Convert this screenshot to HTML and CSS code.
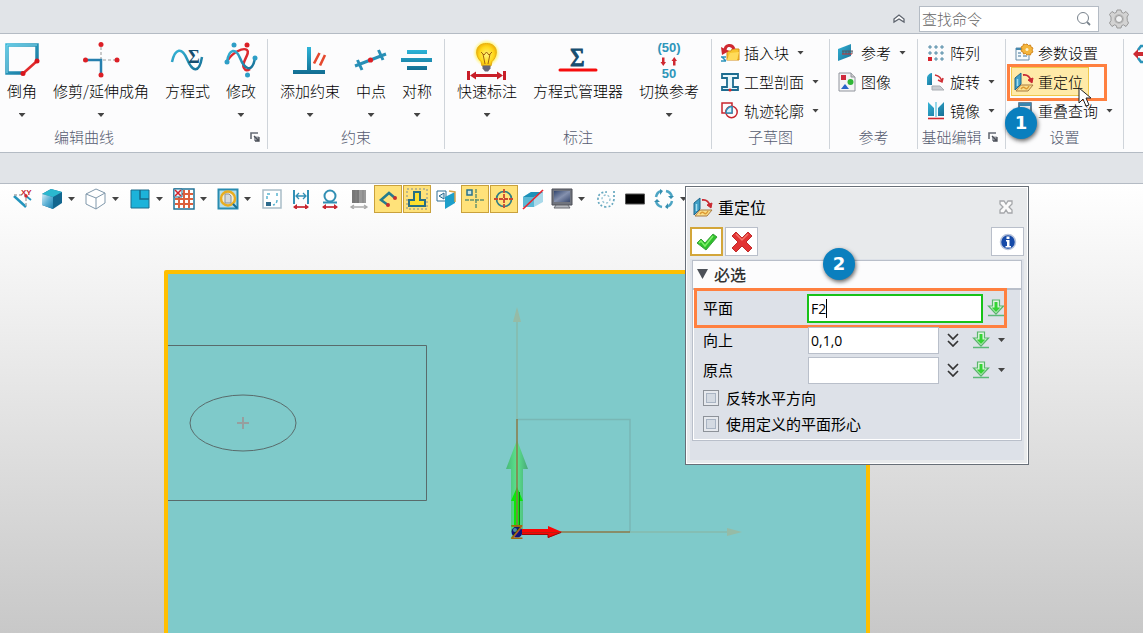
FILE: index.html
```html
<!DOCTYPE html>
<html lang="zh-CN">
<head>
<meta charset="utf-8">
<title>重定位</title>
<link rel="stylesheet" href="styles.css">
</head>
<body>
<svg class="defs" aria-hidden="true">
  <defs>
    <linearGradient id="blue" x1="0" y1="0" x2="1" y2="1"><stop offset="0" stop-color="#35b5d8"/><stop offset="1" stop-color="#176f96"/></linearGradient>
    <linearGradient id="face" x1="0" y1="0" x2="1" y2="1"><stop offset="0" stop-color="#d5eef8"/><stop offset="0.5" stop-color="#5fb2d6"/><stop offset="1" stop-color="#1a7fae"/></linearGradient>
    <linearGradient id="bar" x1="0" y1="0" x2="0" y2="1"><stop offset="0" stop-color="#2db4d8"/><stop offset="1" stop-color="#126d92"/></linearGradient>
    <radialGradient id="bulb"><stop offset="0" stop-color="#fff27a"/><stop offset="0.7" stop-color="#ffd91c"/><stop offset="1" stop-color="#f3b90c"/></radialGradient>
    <radialGradient id="glow"><stop offset="0.7" stop-color="#fff36a"/><stop offset="1" stop-color="#fff9b0" stop-opacity="0"/></radialGradient>
    <linearGradient id="bigGreen" x1="0" x2="1" y1="0" y2="0"><stop offset="0" stop-color="#48b878"/><stop offset="0.5" stop-color="#5be38c"/><stop offset="1" stop-color="#48a878"/></linearGradient>
    <linearGradient id="screen" x1="0" y1="0" x2="1" y2="1"><stop offset="0" stop-color="#33476f"/><stop offset="0.5" stop-color="#8591ae"/><stop offset="1" stop-color="#38496e"/></linearGradient>
    <symbol id="relocate" viewBox="0 0 20 20">
      <path d="M1 6 7 1v11l-6 6z" fill="#3f9fc6" stroke="#1f678c"/>
      <path d="M3.500 7v7" stroke="#a5dff0" stroke-width="1.500"/>
      <path d="M2 19 7 13h12l-5 6z" fill="#fbe08c" stroke="#a87a42"/>
      <path d="M7 17q2-3 4-1t4-2" fill="none" stroke="#dd9a35" stroke-width="1.500"/>
      <path d="M9 3q6-1 8 6" fill="none" stroke="#c92a33" stroke-width="1.800"/>
      <path d="m14 8 5-2-1 5z" fill="#c92a33" stroke="#c92a33"/>
    </symbol>
    <symbol id="down" viewBox="0 0 18 18">
      <path d="M5.500 1h7v6h4L9 15 1.500 7h4z" fill="#dff6df" stroke="#59b66b" stroke-width="1.200"/>
      <path d="M7.500 3h3v5.500h3L9 13 4.500 8.500h3z" fill="#35d335"/>
      <path d="M1 16.500h16" stroke="#5cb878" stroke-width="1.500"/>
    </symbol>
    <symbol id="more" viewBox="0 0 12 14"><path d="m1 1 5 5 5-5M1 8l5 5 5-5" fill="none" stroke="#333" stroke-width="1.700"/></symbol>
    <symbol id="launch" viewBox="0 0 10 10"><path d="M1 7V1h7" fill="none" stroke="#666b75" stroke-width="1.600"/><path d="M4 4.500h5V9H4z" fill="#9a9ea6"/><path d="m4 4 4.500 4.500M9 5v4H5" fill="none" stroke="#4b4f58" stroke-width="1.300"/></symbol>
  </defs>
</svg>

<header class="topbar">
  <button class="plain" aria-label="折叠功能区"><svg width="14" height="12"><path d="m2 6 5-4 5 4v3L7 6 2 9z" fill="#fff" stroke="#5e646e" stroke-width="1.300"/></svg></button>
  <label class="search">
    <input type="text" placeholder="查找命令" aria-label="查找命令">
    <svg width="16" height="16"><circle cx="7" cy="7" r="5.500" fill="#fff" stroke="#78828c"/><path d="m11 11 3 3" stroke="#78828c" stroke-width="1.800"/></svg>
  </label>
  <button class="plain" aria-label="设置"><svg width="20" height="20" viewBox="-10 -10 20 20"><path d="M-2-9h4l.6 2.300 2 .9L7-7.500l2.500 3L8-2l.3 3.500L9.500 4 7 7.500 4.400 5.800l-1.800.9L2 9h-4l-.6-2.300-1.800-.9L-7 7.500-9.500 4-8 1.500V-2l-1.500-2.500 2.500-3 2.600 1.700 1.800-.9z" fill="#d3d3d3" stroke="#999"/><circle r="5" fill="#bbb"/><circle r="3.500" fill="#f0f1f2" stroke="#999"/></svg></button>
</header>

<nav class="ribbon">
  <section class="group g-edit">
    <div class="large-row">
      <button class="large"><svg width="44" height="40"><path d="M37 22V6H7v28h16" fill="none" stroke="url(#blue)" stroke-width="3.500"/><path d="M7 34V6h30" fill="none" stroke="#8ed9ec"/><path d="M37 22 23 34.500" stroke="#e12a2c" stroke-width="2.500"/><circle cx="37" cy="22" r="2.500" fill="#d8151c"/><circle cx="23" cy="34.500" r="2.500" fill="#d8151c"/></svg><span>倒角</span><i class="caret"></i></button>
      <button class="large"><svg width="44" height="40"><path d="M22 8v12M24 21h12" stroke="#bdbdbd" stroke-width="1.600" stroke-dasharray="3 2"/><path d="M8 21h14v13" fill="none" stroke="#267fae" stroke-width="2.500"/><g fill="#dc1f26"><circle cx="22" cy="5.500" r="2.500"/><circle cx="6.500" cy="21" r="2.500"/><circle cx="38" cy="21" r="2.500"/><circle cx="22" cy="36" r="2.500"/></g></svg><span>修剪/延伸成角</span><i class="caret"></i></button>
      <button class="large"><svg width="44" height="40"><path d="M7 23C10 9 17 8 22 20s12 16 15-2" fill="none" stroke="url(#blue)" stroke-width="2.500"/><text x="23" y="24" class="sigma-s">Σ</text></svg><span>方程式</span></button>
      <button class="large"><svg width="44" height="40"><path d="M9 21C13 14 24 8 28 11s-7 14-3 18q2 4 6 1" fill="none" stroke="#dc2a2f" stroke-width="2.500"/><path d="M8 23C10 9 17 9 21 19s12 17 15 0" fill="none" stroke="url(#blue)" stroke-width="2.500"/><g fill="#2e9ec6"><circle cx="15" cy="6" r="2.500"/><circle cx="36" cy="19" r="2.500"/><circle cx="8" cy="23" r="2.500"/><circle cx="28.500" cy="36" r="2.500"/></g><circle cx="28" cy="6" r="2.500" fill="#dc1f26"/></svg><span>修改</span><i class="caret"></i></button>
    </div>
    <footer>编辑曲线<button class="launcher" aria-label="编辑曲线选项"><svg width="10" height="10"><use href="#launch"/></svg></button></footer>
  </section>

  <section class="group g-constraint">
    <div class="large-row">
      <button class="large"><svg width="44" height="40"><path d="M19 8h4v24h-4zM5 31h32v4H5z" fill="url(#bar)"/><path d="m26 24.500 5.500-10.500M32 26.500 37 16" stroke="#e5492e" stroke-width="2.600"/></svg><span>添加约束</span><i class="caret"></i></button>
      <button class="large"><svg width="44" height="40"><path d="M6 27 37 15M8.500 21l4.500 10M29.500 11 34 21" stroke="#288fb6" stroke-width="3"/><circle cx="21.500" cy="21" r="2.600" fill="#dc1f26"/></svg><span>中点</span><i class="caret"></i></button>
      <button class="large"><svg width="44" height="40"><path d="M12 11h20v4H12zM6 19h31v4H6zM12 27h20v4H12z" fill="url(#bar)"/></svg><span>对称</span><i class="caret"></i></button>
    </div>
    <footer>约束</footer>
  </section>

  <section class="group g-dimension">
    <div class="large-row">
      <button class="large"><svg width="44" height="42"><circle cx="21.500" cy="14" r="14" fill="url(#glow)"/><path d="M21.500 4.500c12 0 12 12 5.500 18l-1 4.500h-9l-1-4.500c-6.500-6-6.500-18 5.500-18z" fill="url(#bulb)" stroke="#e6af13"/><path d="m16 13 3 3 2.500-3 2.500 3 3-3M18 15l2 10M25 15l-2 10" fill="none" stroke="#a3640f"/><path d="M17.500 26.500h8v3l-2.500 3h-3l-2.500-3z" fill="#667"/><path d="M2 32h3v9H2zM38 32h3v9h-3zM5 36.500l6-4V35h21v-2.500l6 4-6 4V38H11v2.500z" fill="#c81e28"/></svg><span>快速标注</span><i class="caret"></i></button>
      <button class="large"><svg width="44" height="40"><text x="14" y="27" class="sigma-l">Σ</text><path d="M4 31h36" stroke="#f60d0d" stroke-width="3" stroke-linecap="round"/></svg><span>方程式管理器</span></button>
      <button class="large"><svg width="44" height="40"><text x="22" y="13" class="fifty">(50)</text><text x="22" y="39" class="fifty">50</text><path d="M15 18.500h2.500V23H19l-2.700 4-2.800-4H15zM26 26.500h2.500V22H30l-2.700-4-2.800 4H26z" fill="#cf2830"/></svg><span>切换参考</span><i class="caret"></i></button>
    </div>
    <footer>标注</footer>
  </section>

  <section class="group g-sub">
    <div class="small-col">
      <button class="small"><svg width="20" height="20"><path d="M7 8h4l1-2h7v11H7z" fill="#f7c52e" stroke="#d48d17"/><path d="m10 10 9-1-2 8H7z" fill="#ffdb5a"/><path d="M14 6C12 1 5 1 5 8" fill="none" stroke="#cf2830" stroke-width="3"/><path d="m1 4 1 8 7-4z" fill="#cf2830"/><path d="M1 14h5M1 18h5M2 14l4 4" stroke="#2b92ba" stroke-width="1.500"/></svg><span>插入块</span><i class="caret"></i></button>
      <button class="small"><svg width="20" height="20"><path d="M2 2h16v4h-5v9h5v3H2v-3h5V6H2z" fill="#e8f7fb" stroke="#1d6c90" stroke-width="1.800"/><circle cx="10" cy="18" r="1.500" fill="#d22"/></svg><span>工型剖面</span><i class="caret"></i></button>
      <button class="small"><svg width="20" height="20"><path d="M2 2h10v10H2z" fill="none" stroke="#c9252d" stroke-width="1.500"/><circle cx="11.500" cy="11" r="5.700" fill="none" stroke="#c9252d" stroke-width="1.500"/><path d="M6 12h6V5.500a6 6 0 0 0-6 6.500z" fill="#d7f0fb" stroke="#2b92ba" stroke-width="1.500"/></svg><span>轨迹轮廓</span><i class="caret"></i></button>
    </div>
    <footer>子草图</footer>
  </section>

  <section class="group g-ref">
    <div class="small-col">
      <button class="small"><svg width="20" height="20"><path d="M1 6 14 1v12L1 18z" fill="url(#blue)"/><path d="M5 8h11M6 8v3M9 8v3M12 8v3M15 8v3" stroke="#555b66"/><path d="M5 11h10" stroke="#c33"/></svg><span>参考</span><i class="caret"></i></button>
      <button class="small"><svg width="20" height="20"><path d="M2 1h12l4 4v14H2z" fill="#f4f4f5" stroke="#90949c"/><path d="M14 1v4h4" fill="#ccc" stroke="#90949c"/><path d="M4 3h5v5H4z" fill="#cf2a3c"/><circle cx="13.500" cy="10" r="3" fill="#2fb636"/><path d="m8 12 4 5H4z" fill="#2864c8"/></svg><span>图像</span></button>
    </div>
    <footer>参考</footer>
  </section>

  <section class="group g-basic">
    <div class="small-col">
      <button class="small"><svg width="20" height="20"><g fill="#c9e2ec" stroke="#588da8"><path d="M3 3h2v2H3zM9 3h2v2H9zM15 3h2v2h-2zM3 9h2v2H3zM9 9h2v2H9zM15 9h2v2h-2zM9 15h2v2H9zM15 15h2v2h-2z"/></g><path d="M2 14h4v4H2z" fill="#d9232d"/></svg><span>阵列</span></button>
      <button class="small"><svg width="20" height="20"><path d="M1 5q2-4 5-4v12H1z" fill="url(#blue)"/><path d="M6 18h12l-4-4H6z" fill="#c9ccd1" stroke="#aaadb3"/><path d="M9 3q6 1 7 7M12 8l4 2 1-4" fill="none" stroke="#cf2e34" stroke-width="1.500"/></svg><span>旋转</span><i class="caret"></i></button>
      <button class="small"><svg width="20" height="20"><path d="m2 1 6 6v8H2zM18 1l-6 6v8h6z" fill="url(#blue)"/><path d="M10 1v15" stroke="#54bfdc" stroke-width="1.200"/><path d="M2 17.500h16" stroke="#cf2830" stroke-width="1.600"/></svg><span>镜像</span><i class="caret"></i></button>
    </div>
    <footer>基础编辑<button class="launcher" aria-label="基础编辑选项"><svg width="10" height="10"><use href="#launch"/></svg></button></footer>
  </section>

  <section class="group g-set">
    <div class="small-col">
      <button class="small"><svg width="20" height="20"><path d="M2 5h13v12H2z" fill="#f5fafd" stroke="#698da8"/><path d="M2 5h10v2H2z" fill="#4488ae"/><path d="M4 10h3M9 10h4M4 13h3M9 13h4" stroke="#7b9fb8" stroke-width="1.500"/><path d="m13 1 1.500 1.500 2-.5.5 2 2 1-1 2 1 2-2 1-.5 2-2-.5L13 12l-1.500-1.500-2 .5-.5-2-2-1 1-2-1-2 2-1 .5-2 2 .5z" fill="#f4b53c" stroke="#d4871c"/><circle cx="13" cy="6.500" r="1.500" fill="#fff2cb"/></svg><span>参数设置</span></button>
      <button class="small active"><svg width="20" height="20"><use href="#relocate"/></svg><span>重定位</span></button>
      <button class="small"><svg width="20" height="20"><path d="M5 2h12v11H5z" fill="#eee" stroke="#3b5a74" stroke-width="1.500"/><path d="M5 2h12v3H5z" fill="#3a86b0"/><path d="M2 9h11v8H2z" fill="#fff" stroke="#c9252d"/></svg><span>重叠查询</span><i class="caret"></i></button>
    </div>
    <footer>设置</footer>
    <div class="callout-box ribbon-callout"></div>
    <svg class="cursor" width="14" height="22"><path d="M1 1v15l4-4 3 7 3-1-3-7h5z" fill="#fff" stroke="#222"/></svg>
    <b class="badge badge-one">1</b>
  </section>

  <section class="group g-next">
    <button class="small" aria-label="更多"><svg width="20" height="20"><path d="M16 2H8L5 6M16 18H8l-3-4" fill="none" stroke="#2a93b9" stroke-width="2.500"/><path d="m0 10 5-5v3h10v4H5v3z" fill="#cc2b33"/></svg></button>
  </section>
</nav>

<div class="band"></div>

<main class="viewport">
  <svg class="scene" width="100%" height="100%">
    <g transform="translate(0 -184)">
      <path d="M166 660V272h702v388z" fill="#7fcaca" stroke="#ffbf00" stroke-width="4" stroke-linejoin="round"/>
      <g fill="none" stroke="#596b6b">
        <path d="M168 345.500h258.500v155H168"/>
        <ellipse cx="243" cy="423" rx="53" ry="28"/>
      </g>
      <path d="M237 423h12M243 417v12" stroke="#979f9f" stroke-width="2"/>
      <path d="M517 419.500h113V532" fill="none" stroke="#79b7b5" stroke-width="1.500"/>
      <path d="M517 320v99M630 532h98" stroke="#86bbad" stroke-width="1.600"/>
      <path d="m517 307 4 15h-8zM742 532l-15 4v-8z" fill="#96bba6"/>
      <path d="M511 532v-63h-5l11-29 11 29h-5v63z" fill="url(#bigGreen)"/>
      <path d="M514 530v-29h-3l6-14 6 14h-3v29z" fill="#0ce60c"/>
      <path d="M519.500 492v38" stroke="#0b850b"/>
      <path d="M517 419v113h113" fill="none" stroke="#8c7a4a" stroke-width="1.500"/>
      <circle cx="517" cy="532" r="5.500" fill="#10147a"/>
      <circle cx="515" cy="530" r="2" fill="#4a8fa0"/>
      <path d="M522 529h26v-3l14 6-14 6v-3h-26z" fill="#fb0505"/>
      <path d="M522 534.500h26v3l13-5" fill="none" stroke="#9c0808"/>
      <path d="M522 532.500h38" stroke="#bb2010"/>
      <text x="517" y="539" class="axis">Z</text>
    </g>
  </svg>

  <div class="tools">
    <button class="tool" aria-label="坐标"><svg width="20" height="20"><path d="m1 7 12 11" stroke="#2294bd" stroke-width="2.500"/><path d="M1 6h12v12" fill="none" stroke="#a5abad" stroke-dasharray="3 2" stroke-width="1.500"/><path d="m13 7 5 4" stroke="#2294bd" stroke-width="1.800"/><text x="8" y="6" class="xy">XY</text><circle cx="13" cy="7" r="1.700" fill="#d7242c"/></svg></button>
    <button class="tool" aria-label="着色"><svg width="22" height="22"><path d="m1 6 9-5 11 3v11l-9 6-11-4z" fill="#12668f"/><path d="m1 6 9-5 11 3-9 5z" fill="#2bb8cf"/><path d="m1 6 11 3v12L1 17z" fill="url(#face)"/></svg></button><button class="drop" aria-label="着色选项"><i class="caret"></i></button>
    <button class="tool" aria-label="线框"><svg width="22" height="22"><path d="m1 6 10-5 9 4v10l-9 6-10-5zM1 6l10 4 9-5M11 10v11" fill="#fff" stroke="#8098ab"/></svg></button><button class="drop" aria-label="线框选项"><i class="caret"></i></button>
    <button class="tool" aria-label="视图"><svg width="20" height="20"><path d="M1 1h18v18H1z" fill="#1cb3da" stroke="#1c6d8c"/><path d="M10 1v9h9" fill="none" stroke="#176988" stroke-width="1.500"/></svg></button><button class="drop" aria-label="视图选项"><i class="caret"></i></button>
    <button class="tool" aria-label="网格"><svg width="22" height="22"><path d="M1 1h20v20H1z" fill="#fff" stroke="#207297" stroke-width="1.500"/><path d="M6 2v18M11 2v18M16 2v18M2 6h18M2 11h18M2 16h18" stroke="#dc603d" stroke-width="2"/><path d="M1 1h8v8H1z" fill="#e8f6fb" stroke="#207297"/><path d="m2 2 6 6M8 2 2 8" stroke="#d3202b" stroke-width="1.500"/></svg></button><button class="drop" aria-label="网格选项"><i class="caret"></i></button>
    <button class="tool" aria-label="缩放"><svg width="22" height="22"><path d="M1.500 1.500h19v19h-19z" fill="#b4dfec" stroke="#298bb0" stroke-width="2"/><circle cx="11" cy="10.500" r="7" fill="#f1ecd5" stroke="#e8ad21" stroke-width="2.500"/><path d="M8 6h4l2 2v7H8z" fill="#d4dade" stroke="#8b929a"/><path d="m16 16 4 4" stroke="#176c91" stroke-width="2"/></svg></button><button class="drop" aria-label="缩放选项"><i class="caret"></i></button>
    <button class="tool" aria-label="窗口"><svg width="20" height="20"><path d="M1 1h18v18H1z" fill="#fff" stroke="#a9bdc8" stroke-width="1.500"/><path d="M4 13h5v4H4z" fill="#2e6b8d"/><path d="M5 10V5h4M15 4v4M15 11q0 4-4 5" fill="none" stroke="#5bb5d1" stroke-width="1.500" stroke-dasharray="3 2"/></svg></button>
    <button class="tool" aria-label="线性标注"><svg width="20" height="20"><path d="M3 1v14M17 1v14" stroke="#318fb5" stroke-width="2"/><path d="M5 7h10M8 4 5 7l3 3M12 4l3 3-3 3" fill="none" stroke="#318fb5" stroke-width="1.300"/><path d="M3 18h14" stroke="#c7252f" stroke-width="1.700"/><path d="m6 15-4 3 4 3zM14 15l4 3-4 3z" fill="#c7252f"/></svg></button>
    <button class="tool" aria-label="圆标注"><svg width="20" height="20"><circle cx="10" cy="7" r="5.500" fill="none" stroke="#328fb3" stroke-width="2"/><path d="M3 13.500h14" stroke="#328fb3" stroke-width="2"/><path d="M3 18h14" stroke="#c7252f" stroke-width="1.700"/><path d="m6 15-4 3 4 3zM14 15l4 3-4 3z" fill="#c7252f"/></svg></button>
    <button class="tool" aria-label="厚度"><svg width="20" height="20"><path d="M3 1h7v13H3z" fill="#777"/><path d="M10 1h7v13h-7z" fill="#9a9a9a"/><path d="M7 1v13M14 1v13" stroke="#858585"/><path d="M3 18h14M5 16l-3 2 3 2M15 16l3 2-3 2" stroke="#aaa" stroke-width="1.300" fill="none"/></svg></button>
    <button class="tool on" aria-label="轮廓"><svg width="20" height="20"><path d="M10 16 3 11l8-7 6 5" fill="none" stroke="#257b8e" stroke-width="2.500"/><circle cx="17" cy="9" r="2" fill="#c9302d"/><circle cx="10" cy="16" r="2" fill="#c9302d"/></svg></button>
    <button class="tool on" aria-label="约束显示"><svg width="22" height="22"><path d="M1 1h20v20H1z" fill="none" stroke="#aaa98c" stroke-width="1.500" stroke-dasharray="2 2"/><path d="M8 4h6v8h5v6H3v-6h5z" fill="#ffe02e" stroke="#286f83" stroke-width="2"/></svg></button>
    <button class="tool" aria-label="投影"><svg width="20" height="20"><path d="M1 2h9v10H1z" fill="#fff" stroke="#2e6e95"/><path d="m8 4-5 3 5 3z" fill="#d2e9f2" stroke="#28678c"/><path d="m9 8 10-5v11L9 20z" fill="#1d9fca"/><path d="m13 2 6 1v10" fill="none" stroke="#d6a44d" stroke-width="1.500"/></svg></button>
    <button class="tool on" aria-label="捕捉"><svg width="22" height="22"><path d="M12 1v20M1 12h20" stroke="#67936f" stroke-width="1.500" stroke-dasharray="4 1"/><path d="M3 2h5v5H3z" fill="#cce4dc" stroke="#29718c" stroke-width="1.500"/></svg></button>
    <button class="tool on" aria-label="目标"><svg width="20" height="20"><circle cx="10" cy="10" r="7.500" fill="none" stroke="#317e85" stroke-width="1.700"/><path d="M10 0v20M0 10h20" stroke="#c94831" stroke-width="1.800" stroke-dasharray="4 1"/></svg></button>
    <button class="tool" aria-label="隐藏面"><svg width="22" height="22"><path d="m1 9 8-5h12v10l-9 5H1z" fill="#a9d9ea"/><path d="m1 9 8-5h12l-9 5z" fill="#1e91b8"/><path d="M1 9h11v10H1z" fill="#5bb8d5"/><path d="M1 21 21 2" stroke="#e42631" stroke-width="1.700"/></svg></button>
    <button class="tool" aria-label="显示"><svg width="22" height="22"><path d="M1 1h20v16H1z" fill="#70747e" stroke="#4d4f56"/><path d="M3 3h16v11H3z" fill="url(#screen)"/><path d="M5 17h12l2 3H3z" fill="#b6b8bd" stroke="#66696f"/></svg></button><button class="drop" aria-label="显示选项"><i class="caret"></i></button>
    <button class="tool" aria-label="套索"><svg width="20" height="20"><path d="M18 2v8q-1 8-8 8-8-1-8-8 0-7 9-7" fill="none" stroke="#65a7bf" stroke-width="1.700" stroke-dasharray="2 2"/><circle cx="10" cy="10" r="4" fill="none" stroke="#8fbfd0" stroke-width="1.300" stroke-dasharray="2 2"/></svg></button>
    <button class="tool" aria-label="颜色"><svg width="20" height="20"><path d="M.5 5h19v10H.5z" fill="#000" stroke="#555"/></svg></button>
    <button class="tool" aria-label="刷新"><svg width="20" height="20"><g fill="none" stroke="#4da5c4" stroke-width="2.500"><path d="M2 8q1-5 5-6M12 2q5 1 6 6M18 12q-1 5-6 6M8 18q-5-1-6-6"/></g><path d="m6 0 3 2-3 4zM20 7l-3 3-3-3zM14 20l-3-2 3-4zM0 13l3-3 3 3z" fill="#358eaf"/></svg></button><button class="drop" aria-label="刷新选项"><i class="caret"></i></button>
  </div>

  <form class="dialog" aria-label="重定位">
    <div class="title">
      <svg width="20" height="20"><use href="#relocate"/></svg><h1>重定位</h1>
      <button type="button" class="plain" aria-label="关闭"><svg width="14" height="14"><path d="M1 1h4l2 3 2-3h4v3l-3 3 3 3v3H9l-2-3-2 3H1v-3l3-3-3-3z" fill="#fafafa" stroke="#a5a7aa" stroke-width="1.300"/></svg></button>
    </div>
    <div class="actions">
      <button type="button" class="ok" aria-label="确定"><svg width="22" height="20"><path d="m1 11 4-4 4 4 8-9 4 3-11 13z" fill="#2fc02c" stroke="#3aa03c"/><path d="m3 11 2-2 4 5 8-10" fill="none" stroke="#7ff06a" stroke-width="1.500"/></svg></button>
      <button type="button" aria-label="取消"><svg width="22" height="22"><path d="m5 1 6 6 6-6 4 4-6 6 6 6-4 4-6-6-6 6-4-4 6-6-6-6z" fill="#e23333" stroke="#c02a2a" stroke-linejoin="round"/><path d="m5 3 6 6 6-6" fill="none" stroke="#f47468" stroke-width="1.500"/></svg></button>
      <button type="button" class="info" aria-label="信息"><svg width="18" height="18"><circle cx="9" cy="9" r="7.500" fill="#164aa8" stroke="#b8c4dc" stroke-width="1.500"/><path d="M7.500 3.500h3V6h-3zM7 7h3.500v6H12v1.500H6.500V13H8V8.500H7z" fill="#fff"/></svg></button>
    </div>
    <div class="panel">
      <h2><i class="tri"></i>必选</h2>
      <div class="fields">
        <div class="field plane"><label for="plane">平面</label><input id="plane" type="text" value="F2"><i class="text-caret"></i><button type="button" class="plain" aria-label="拾取平面"><svg width="18" height="18"><use href="#down"/></svg></button><div class="callout-box plane-callout"></div></div>
        <div class="field"><label for="up">向上</label><input id="up" type="text" value="0,1,0"><button type="button" class="plain" aria-label="展开向上"><svg width="12" height="14"><use href="#more"/></svg></button><button type="button" class="plain pick" aria-label="拾取向上"><svg width="18" height="18"><use href="#down"/></svg><i class="caret"></i></button></div>
        <div class="field"><label for="origin">原点</label><input id="origin" type="text"><button type="button" class="plain" aria-label="展开原点"><svg width="12" height="14"><use href="#more"/></svg></button><button type="button" class="plain pick" aria-label="拾取原点"><svg width="18" height="18"><use href="#down"/></svg><i class="caret"></i></button></div>
        <label class="check"><input type="checkbox">反转水平方向</label>
        <label class="check"><input type="checkbox">使用定义的平面形心</label>
      </div>
    </div>
    <b class="badge badge-two">2</b>
  </form>
</main>
</body>
</html>
```
FILE: styles.css
```css
* { box-sizing: border-box; }
body {
  margin: 0;
  min-height: 100vh;
  display: flex;
  flex-direction: column;
  overflow: hidden;
  background: #e1e4e8;
  color: #000;
  font: 15px/20px "Noto Sans CJK SC", sans-serif;
  font-weight: 300;
}
button, input { font: inherit; color: inherit; }
button { display: flex; align-items: center; justify-content: center; border: 0; padding: 0; background: none; }
svg { display: block; flex: none; }
.defs { position: absolute; width: 0; height: 0; }
.caret { display: block; flex: none; width: 7px; height: 4px; background: #444; clip-path: polygon(0 0, 100% 0, 50% 100%); }

.topbar { height: 34px; display: flex; align-items: center; justify-content: flex-end; gap: 10px; padding: 4px 14px 0 0; border-bottom: 1px solid #b4bbc4; }
.topbar > .plain:first-child { margin-right: 3px; }
.search { width: 180px; height: 26px; display: flex; align-items: center; padding: 0 6px 0 2px; background: #fff; border: 1px solid #b4bbc4; }
.search input { flex: 1; min-width: 0; border: 0; padding: 0; outline: 0; background: none; }
.search input::placeholder { color: #666; opacity: 1; }

.ribbon { display: flex; overflow: hidden; background: #fcfcfd; padding: 5px 0 3px; border-bottom: 1px solid #b4bbc4; }
.group { flex: none; position: relative; display: flex; flex-direction: column; justify-content: space-between; border-right: 1px solid #cfd4da; }
.g-edit { width: 268px; }
.g-constraint { width: 177px; }
.g-dimension { width: 267px; }
.g-sub, .g-set { width: 118px; }
.g-ref, .g-basic { width: 88px; }
.g-next { width: 40px; border: 0; justify-content: flex-start; align-items: flex-start; padding-left: 9px; }
.large-row { display: flex; align-items: flex-start; gap: 16px; height: 86px; padding-left: 12px; white-space: nowrap; }
.g-edit .large-row { padding-left: 7px; }
.large { flex-direction: column; justify-content: flex-start; }
.large svg { height: 42px; margin: 0 -7px; overflow: visible; }
.large .caret { margin-top: 12px; }
.small-col { height: 86px; margin-top: -1px; padding-left: 8px; }
.g-ref .small-col { padding-left: 7px; }
.small { height: 29px; gap: 4px; white-space: nowrap; }
.small .caret { margin-left: 4px; }
.small.active { margin-left: -3px; padding: 0 5px 0 2px; background: #ffeaa8; border: 1px solid #efc84a; }
.group footer { display: flex; align-items: center; justify-content: center; height: 24px; color: #555b70; }
.g-edit footer { justify-content: flex-start; padding-left: 54px; }
.launcher { width: 18px; height: 18px; }
.g-edit .launcher { margin-left: auto; margin-right: 3px; }
.g-basic .launcher { margin-left: 2px; }
.sigma-s { font: bold 18px "Liberation Serif", serif; fill: #174e70; }
.sigma-l { font: 25px "Liberation Serif", serif; fill: #174e70; stroke: #174e70; }
.fifty { font: bold 13px "Liberation Sans", sans-serif; fill: #2e96ba; text-anchor: middle; }
.axis { font: 19px "DejaVu Sans", sans-serif; fill: #a4680e; text-anchor: middle; }
.xy { font: bold 8px "Liberation Sans", sans-serif; fill: #c92630; }

.callout-box { position: absolute; border: 3px solid #ff8040; pointer-events: none; }
.ribbon-callout { left: 1px; top: 25px; width: 100px; height: 37px; }
.cursor { position: absolute; left: 72px; top: 48px; }
.badge { position: absolute; width: 32px; height: 32px; border-radius: 50%; background: #0a7fbe; color: #fff; box-shadow: 1px 2px 4px rgba(0, 0, 0, .6); text-align: center; font: bold 18px/32px "DejaVu Sans", sans-serif; }
.badge-one { left: -1px; top: 68px; }
.group:has(.badge) { z-index: 1; }

.band { height: 31px; border-bottom: 1px solid #b4bbc4; }

.viewport { flex: 1; min-height: 449px; position: relative; background: linear-gradient(#fff, #c8c8c8); }
.scene { position: absolute; inset: 0; }
.tools { position: relative; display: flex; align-items: center; height: 30px; padding-left: 9px; }
.tool { flex: none; width: 29px; height: 28px; padding-right: 1px; }
.tool.on { width: 28px; margin-right: 1px; padding: 0; background: #ffe27a; border: 1px solid #c9a13c; }
.drop { flex: none; width: 15px; height: 28px; justify-content: flex-start; padding-left: 1px; }

.dialog { position: absolute; left: 685px; top: 2px; width: 344px; padding: 4px; background: #e8eaec; border: 1px solid #686f78; box-shadow: inset 0 0 0 1px #fff; }
.title { display: flex; align-items: center; height: 36px; gap: 5px; padding: 0 11px 5px 3px; }
.title h1 { flex: 1; margin: 0; font-size: 16px; font-weight: 400; line-height: 24px; }
.actions { display: flex; gap: 2px; height: 29px; }
.actions button { width: 33px; background: #fff; border: 1px solid #b9bfca; }
.actions .ok { border: 2px solid #d3a63a; }
.actions .info { margin-left: auto; }
.panel { margin-top: 3px; padding: 1px 2px 19px; background: #dde1e8; }
.panel h2 { display: flex; align-items: center; gap: 6px; height: 29px; margin: 0; padding: 0 0 1px 4px; background: #fcfcfd; border: 1px solid #b9bfca; font-size: 16px; font-weight: 500; color: #333; }
.tri { width: 11px; height: 10px; background: #4d5158; clip-path: polygon(0 0, 100% 0, 50% 100%); }
.fields { display: flex; flex-direction: column; border: 1px solid #b9bfca; box-shadow: inset -1px -1px 0 #fff, inset 1px 0 0 #fff; padding: 3px 10px 0; }
.field { position: relative; display: flex; align-items: center; height: 30px; font-weight: 400; }
.field label { width: 105px; line-height: 20px; }
.field input { width: 131px; height: 27px; padding: 0 2px; border: 1px solid #b9bfca; background: #fff; outline: 0; font: 14px "Open Sans", sans-serif; }
.field .plain { margin-left: 8px; }
.field .pick { margin-left: 13px; gap: 8px; }
.field.plane { height: 32px; padding-bottom: 2px; }
.plane label { width: 104px; }
.plane input { width: 176px; height: 29px; border: 2px solid #18c218; }
.plane .plain { margin-left: 4px; }
.plane-callout { left: -9px; top: -5px; width: 313px; height: 40px; }
.text-caret { position: absolute; left: 123px; top: 6px; width: 1px; height: 19px; background: #000; }
.check { display: flex; align-items: center; gap: 7px; height: 26px; font-weight: 400; }
.check input { appearance: none; width: 16px; height: 16px; margin: 0; border: 1px solid #8d9299; background: #d4dae2; box-shadow: inset 0 0 0 2px #e6e9ee, inset 0 0 0 3px #a9b4c3; }
.fields .check:last-child { margin-bottom: 3px; }
.badge-two { left: 137px; top: 61px; }
```
